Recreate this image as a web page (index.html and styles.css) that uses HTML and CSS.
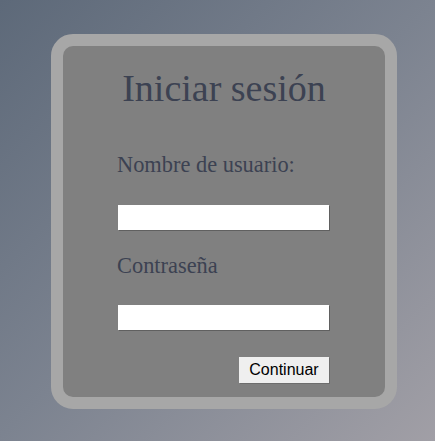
FILE: index.html
```html
<!DOCTYPE html>
<html lang="es">
<head>
<meta charset="utf-8">
<title>Iniciar sesión</title>
<link rel="stylesheet" href="styles.css">
</head>
<body>
<main class="page">
  <section class="card">
    <h1 class="title">Iniciar sesión</h1>
    <form class="form">
      <label class="label label-user" for="user">Nombre de usuario:</label>
      <input class="field field-user" id="user" type="text">
      <label class="label label-pass" for="pass">Contraseña</label>
      <input class="field field-pass" id="pass" type="password">
      <div class="actions">
        <button class="btn" type="button">Continuar</button>
      </div>
    </form>
  </section>
</main>
</body>
</html>
```
FILE: styles.css
```css
html, body {
  margin: 0;
  height: 100%;
}
body {
  background: linear-gradient(135deg, #5d6979 0%, #7c8390 50%, #a19fa6 100%);
  font-family: "Liberation Serif", "Times New Roman", serif;
}
.page {
  padding-top: 34px;
  padding-left: 51px;
}
.card {
  box-sizing: border-box;
  width: 346px;
  height: 375px;
  border: 12px solid #a7a7a7;
  border-radius: 22px;
  background: #808080;
  display: flex;
  flex-direction: column;
  align-items: center;
}
.title {
  margin: 20px 0 0;
  font-size: 38px;
  font-weight: normal;
  color: #3c4252;
  line-height: normal;
}
.form {
  width: 211px;
  align-self: flex-start;
  margin-left: 55px;
  display: flex;
  flex-direction: column;
}
.label {
  font-size: 22.4px;
  color: #3c4252;
  line-height: normal;
  margin-left: -1px;
}
.label-user {
  margin-top: 42px;
}
.label-pass {
  margin-top: 23px;
}
.field {
  box-sizing: border-box;
  height: 25px;
  width: 211px;
  border: none;
  background: #fff;
  box-shadow: 1px 1px 0 rgba(0, 0, 0, 0.25);
  margin-top: 27px;
  padding: 0 4px;
}
.field-pass {
  margin-top: 26px;
}
.actions {
  display: flex;
  justify-content: flex-end;
  margin-top: 27px;
}
.btn {
  box-sizing: border-box;
  height: 26px;
  width: 90px;
  padding: 0;
  border: none;
  background: #efefef;
  font-family: "Liberation Sans", Arial, sans-serif;
  font-size: 16px;
  color: #000;
  box-shadow: 1px 1px 0 rgba(0, 0, 0, 0.15);
}
```
